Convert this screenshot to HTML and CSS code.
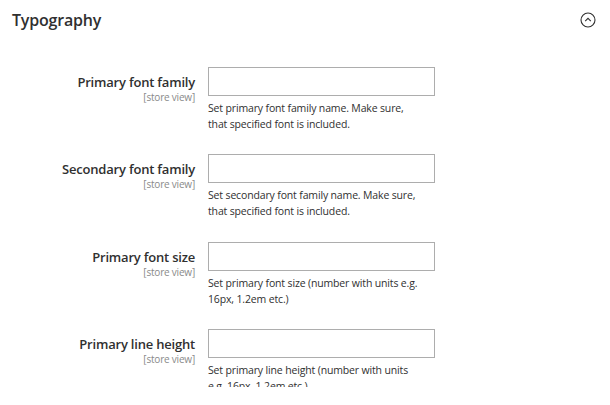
FILE: index.html
```html
<!DOCTYPE html>
<html lang="en">
<head>
    <meta charset="UTF-8">
    <meta name="viewport" content="width=device-width, initial-scale=1.0">
    <title>Typography</title>
    <link rel="stylesheet" href="styles.css">
</head>
<body>
    <div class="section">
        <div class="section-head">
            <h2>Typography</h2>
            <span class="toggle">
                <svg width="16" height="16" viewBox="0 0 16 16">
                    <circle cx="8" cy="8" r="7" fill="none" stroke="#303030" stroke-width="1.1"/>
                    <path d="M5.2 9.2 L8 6.4 L10.8 9.2" fill="none" stroke="#303030" stroke-width="1.1"/>
                </svg>
            </span>
        </div>

        <div class="field">
            <div class="label">
                <span class="name">Primary font family</span>
                <span class="scope">[store view]</span>
            </div>
            <div class="control">
                <input type="text">
                <p class="note">Set primary font family name. Make sure, that specified font is included.</p>
            </div>
        </div>

        <div class="field">
            <div class="label">
                <span class="name">Secondary font family</span>
                <span class="scope">[store view]</span>
            </div>
            <div class="control">
                <input type="text">
                <p class="note">Set secondary font family name. Make sure, that specified font is included.</p>
            </div>
        </div>

        <div class="field">
            <div class="label">
                <span class="name">Primary font size</span>
                <span class="scope">[store view]</span>
            </div>
            <div class="control">
                <input type="text">
                <p class="note">Set primary font size (number with units e.g. 16px, 1.2em etc.)</p>
            </div>
        </div>

        <div class="field">
            <div class="label">
                <span class="name">Primary line height</span>
                <span class="scope">[store view]</span>
            </div>
            <div class="control">
                <input type="text">
                <p class="note">Set primary line height (number with units e.g. 16px, 1.2em etc.)</p>
            </div>
        </div>
    </div>
</body>
</html>
```

FILE: styles.css
```css
body {
    font-family: "Open Sans", Arial, sans-serif;
    color: #303030;
    background: #fff;
    margin: 0;
    padding: 0;
}
.section {
    padding: 0 11px;
}
.section-head {
    display: flex;
    justify-content: space-between;
    align-items: center;
    height: 37.6px;
    padding-top: 2px;
    box-sizing: border-box;
}
.section-head h2 {
    margin: 0 0 0 1px;
    font-size: 16px;
    font-weight: 600;
    letter-spacing: -0.2px;
    color: #303030;
}
.toggle {
    display: flex;
    margin-right: 3px;
}
.field {
    display: grid;
    grid-template-columns: 184px 227px;
    column-gap: 13px;
    padding-top: 29.4px;
    margin-bottom: -7px;
}
.label {
    display: flex;
    flex-direction: column;
    align-items: flex-end;
    padding-top: 8px;
}
.name {
    font-size: 13px;
    font-weight: 600;
    letter-spacing: -0.2px;
    line-height: 15px;
}
.scope {
    font-size: 10px;
    color: #8a8a8a;
    letter-spacing: -0.2px;
    line-height: 14px;
}
input {
    display: block;
    box-sizing: border-box;
    width: 227px;
    height: 29px;
    border: 1px solid #adadad;
    margin: 0;
    padding: 0 8px;
}
.note {
    max-width: 214px;
    margin: 4px 0 0;
    font-size: 10.5px;
    letter-spacing: -0.15px;
    line-height: 16px;
}
```
